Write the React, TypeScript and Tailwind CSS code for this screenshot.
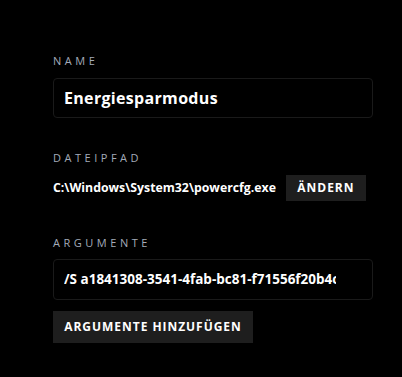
import { useState } from 'react';

const font = { fontFamily: '"Open Sans", "Liberation Sans", sans-serif' };

const Label = ({ children }: { children: string }) => (
  <div className="text-[11px] leading-[14px] tracking-[0.32em] text-[#a3abb9] uppercase">{children}</div>
);

const App = () => {
  const [name, setName] = useState('Energiesparmodus');
  const [args, setArgs] = useState('/S a1841308-3541-4fab-bc81-f71556f20b4c');

  return (
    <div className="min-h-[377px] w-full bg-black text-white" style={font}>
      <div className="pl-[53px] pr-[29px] pt-[54px] flex flex-col">
        <Label>Name</Label>
        <div className="mt-[10px] h-[40px] rounded-[4px] border border-[#1a1a1a] pl-[10px] flex items-center">
          <input
            value={name}
            onChange={(e) => setName(e.target.value)}
            className="w-full bg-transparent outline-none text-[16px] font-bold tracking-[0.02em] text-white"
          />
        </div>

        <div className="mt-[33px]">
          <Label>Dateipfad</Label>
        </div>
        <div className="mt-[10px] flex items-center gap-[10px]">
          <span className="text-[12.3px] font-bold text-white">C:\Windows\System32\powercfg.exe</span>
          <button className="h-[26px] w-[80px] bg-[#1e1e1e] text-[12px] font-bold tracking-[0.08em] text-white">
            ÄNDERN
          </button>
        </div>

        <div className="mt-[35px]">
          <Label>Argumente</Label>
        </div>
        <div className="mt-[9px] h-[41px] rounded-[4px] border border-[#1a1a1a] pl-[10px] pr-[36px] flex items-center">
          <input
            value={args}
            onChange={(e) => setArgs(e.target.value)}
            className="w-full bg-transparent outline-none text-[13.5px] font-bold text-white"
          />
        </div>
        <div className="mt-[11px]">
          <button className="h-[32px] w-[200px] bg-[#1e1e1e] text-[12px] font-bold tracking-[0.08em] text-white">
            ARGUMENTE HINZUFÜGEN
          </button>
        </div>
      </div>
    </div>
  );
};

export default App;
